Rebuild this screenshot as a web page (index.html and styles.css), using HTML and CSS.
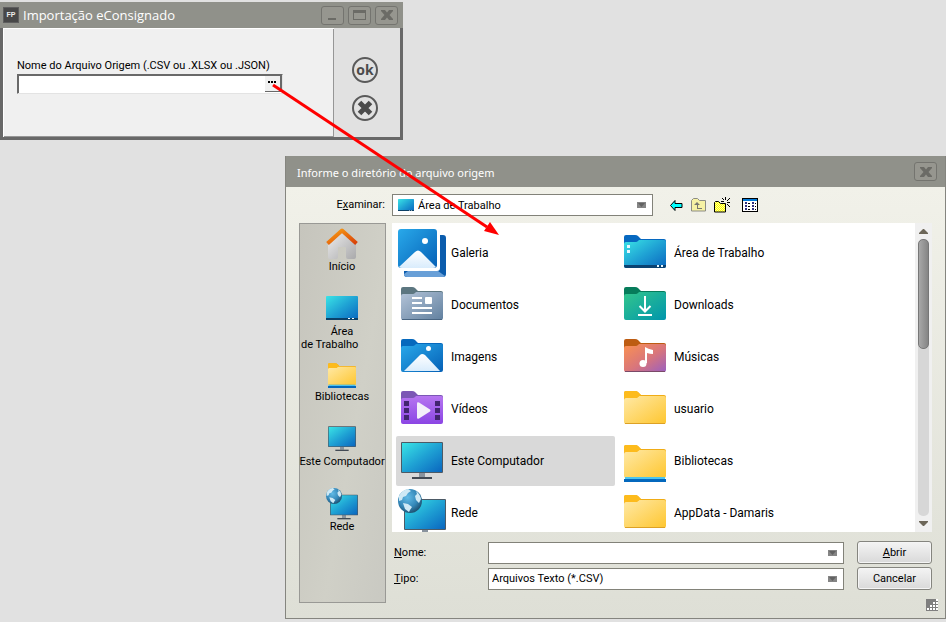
FILE: index.html
```html
<!DOCTYPE html>
<html lang="pt-BR">
<head>
<meta charset="utf-8">
<title>Importação eConsignado</title>
<link rel="stylesheet" href="styles.css">
</head>
<body>
<svg class="defs" aria-hidden="true">
  <defs>
    <linearGradient id="g-yellow" x1="0" y1="0" x2="1" y2="1"><stop offset="0" stop-color="#ffe9a6"/><stop offset="1" stop-color="#fec62f"/></linearGradient>
    <linearGradient id="g-cyan" x1="0" y1="0" x2="1" y2="1"><stop offset="0" stop-color="#3ae4e6"/><stop offset=".5" stop-color="#1fa2d4"/><stop offset="1" stop-color="#0a66bf"/></linearGradient>
    <linearGradient id="g-blue" x1="0" y1="0" x2="1" y2="1"><stop offset="0" stop-color="#29a9ea"/><stop offset="1" stop-color="#0560b6"/></linearGradient>
    <linearGradient id="g-slate" x1="0" y1="0" x2="1" y2="1"><stop offset="0" stop-color="#b4c4d8"/><stop offset="1" stop-color="#61809f"/></linearGradient>
    <linearGradient id="g-green" x1="0" y1="0" x2="1" y2="1"><stop offset="0" stop-color="#33c68c"/><stop offset="1" stop-color="#0095ac"/></linearGradient>
    <linearGradient id="g-music" x1="0" y1="0" x2="1" y2="1"><stop offset="0" stop-color="#fb9250"/><stop offset=".55" stop-color="#d8757c"/><stop offset="1" stop-color="#9a5fc0"/></linearGradient>
    <linearGradient id="g-purple" x1="0" y1="0" x2="0" y2="1"><stop offset="0" stop-color="#b676f0"/><stop offset="1" stop-color="#8b45e4"/></linearGradient>
    <linearGradient id="g-snow" x1="0" y1="0" x2="0" y2="1"><stop offset="0" stop-color="#ffffff"/><stop offset="1" stop-color="#d9ecfc"/></linearGradient>
    <linearGradient id="g-house" x1="0" y1="0" x2="1" y2="1"><stop offset="0" stop-color="#f0f0f0"/><stop offset="1" stop-color="#a9a9ab"/></linearGradient>
    <linearGradient id="g-roof" x1="0" y1="0" x2="1" y2="1"><stop offset="0" stop-color="#f9a114"/><stop offset="1" stop-color="#d83f08"/></linearGradient>
    <radialGradient id="g-globe" cx=".4" cy=".35" r=".7"><stop offset="0" stop-color="#62bbe6"/><stop offset=".6" stop-color="#3487b8"/><stop offset="1" stop-color="#1c4a68"/></radialGradient>
    <symbol id="tab" viewBox="0 0 48 48"><path d="M3 20V8q0-2 2-2h9q2 0 3 1l3 3h23q2 0 2 2v3H3z"/></symbol>
    <symbol id="front" viewBox="0 0 48 48"><path d="M3 15q0-2 2-2h10q1 0 2-1l1-1h25q2 0 2 2v24q0 2-2 2H5q-2 0-2-2z"/></symbol>
    <symbol id="folder" viewBox="0 0 48 48"><use href="#tab" fill="#f0ac16"/><use href="#front" fill="url(#g-yellow)"/><path d="M3 8q0-2 2-2h9q2 0 3 1l3 3-3 2q-1 1-2 1H3z" fill="#fdbb1c"/><path d="M4 38.500h40" stroke="#dda125"/></symbol>
    <symbol id="library" viewBox="0 0 48 48"><use href="#folder" y="2"/><path d="M4 40h40v2H4z" fill="#4cc5ef"/><path d="M3 42h42v3H3z" fill="#0468bd"/></symbol>
    <symbol id="monitor" viewBox="0 0 48 48"><path d="M21 35h6v5h-6z" fill="#89939e"/><path d="M14 40h20v2H14z" fill="#424a54"/><rect x="3" y="5" width="42" height="31" rx="1" fill="#4c5a66"/><path d="M4 6h40v29H4z" fill="url(#g-cyan)"/></symbol>
    <symbol id="network" viewBox="0 0 48 48"><use href="#monitor" x="3" y="5"/><circle cx="12" cy="12" r="12" fill="url(#g-globe)"/><path d="M1 7q3-6 9-7l3 2-3 2-2 3-3 1-1 3-3 1zM18 2q4 3 5 8l-2 4-3-3-1-4 2-2zM5 14l5 1 4 3-2 3-1 2-4-3z" fill="#cfe9f5"/></symbol>
    <symbol id="desktop" viewBox="0 0 32 24"><rect width="32" height="24" rx="1" fill="url(#g-cyan)"/><path d="M0 22h32v2H0z" fill="#0b4067"/><path d="M22 22h2v1h-2zm4 0h2v1h-2z" fill="#fff"/></symbol>
    <symbol id="drop" viewBox="0 0 9 6"><path d="M0 0h9v6H0z" fill="#858585"/><path d="M1 1h7L4.500 5z" fill="#626262"/></symbol>
    <symbol id="close" viewBox="0 0 12 10"><path d="M0 0h4l2 2.500L8 0h4v1L8.500 5 12 9v1H8L6 7.500 4 10H0V9l3.500-4L0 1z"/></symbol>
    <pattern id="dither" width="2" height="2" patternUnits="userSpaceOnUse"><path d="M0 0h2v2H0z" fill="#ff0"/><path d="M0 0h1v1H0zM1 1h1v1H1z" fill="#ffff9c"/></pattern>
  </defs>
</svg>

<section class="window import" aria-label="Importação eConsignado">
  <header class="titlebar">
    <span class="app-icon">FP</span>
    <h1>Importação eConsignado</h1>
    <button class="caption" aria-label="Minimizar"><svg width="12" height="12"><path d="M1 9h8v2H1z"/></svg></button>
    <button class="caption" aria-label="Maximizar"><svg width="13" height="10"><path d="M0 0h13v10H0zm1 3v6h11V3z" fill-rule="evenodd"/></svg></button>
    <button class="caption" aria-label="Fechar"><svg width="12" height="10"><use href="#close"/></svg></button>
  </header>
  <div class="import-body">
    <form class="import-form">
      <label for="origem">Nome do Arquivo Origem (.CSV ou .XLSX ou .JSON)</label>
      <div class="picker">
        <input id="origem" type="text">
        <button type="button" aria-label="Procurar"><svg width="9" height="2"><path d="M0 0h2v2H0zM3 0h2v2H3zM6 0h2v2H6z"/></svg></button>
      </div>
    </form>
    <div class="import-actions">
      <button class="round">ok</button>
      <button class="round" aria-label="Cancelar"><svg width="16" height="16" viewBox="0 0 16 16"><path d="M2.500 2.500l11 11m0-11l-11 11" stroke="#4b4b4b" stroke-width="5"/></svg></button>
    </div>
  </div>
</section>

<section class="window chooser" aria-label="Informe o diretório do arquivo origem">
  <header class="titlebar">
    <h2>Informe o diretório do arquivo origem</h2>
    <button class="caption" aria-label="Fechar"><svg width="12" height="10"><use href="#close"/></svg></button>
  </header>
  <div class="chooser-body">
    <div class="toolbar">
      <label for="pasta">E<u>x</u>aminar:</label>
      <div class="combo lookin">
        <svg class="lead" width="16" height="12"><use href="#desktop"/></svg>
        <select id="pasta"><option>Área de Trabalho</option></select>
        <svg class="arrow" width="9" height="6"><use href="#drop"/></svg>
      </div>
      <div class="tools">
        <button aria-label="Voltar"><svg width="13" height="11"><path d="M.500 5.500l4.500-5v3h7v4H5v3z" fill="#0ff" stroke="#000"/></svg></button>
        <button aria-label="Um nível acima"><svg width="15" height="14"><path d="M.500 13V2.500l2-2h4l2 2h6V13z" fill="#f6f2a4" stroke="#8c8c84"/><path d="M3 7l3-3 3 3H7v3h4v1H6V7z" fill="#77776f"/></svg></button>
        <button aria-label="Nova pasta"><svg width="17" height="16"><path d="M.500 15V5.500l1-1h3l2 2h5V15z" fill="url(#dither)" stroke="#000"/><path d="M11 0h1v3h-1zM11 7h1v3h-1zM7 4h3v1H7zM13 5h3v1h-3zM8 1h1v1H8zM9 2h1v1H9zM15 1h1v1h-1zM14 2h1v1h-1zM13 3h1v1h-1zM13 7h1v1h-1zM14 8h1v1h-1zM15 9h1v1h-1z"/></svg></button>
        <button class="views" aria-label="Exibição"><svg width="16" height="14"><path d="M0 0h16v14H0z"/><path d="M1 3h14v10H1z" fill="#fff"/><path d="M1 1h14v2H1z" fill="#0078d7"/><path d="M3 4h2v2H3zM3 7h2v2H3zM3 10h2v2H3zM10 4h2v2h-2zM10 7h2v2h-2zM10 10h2v2h-2z" fill="#303080"/><path d="M6 5h2v1H6zM6 8h2v1H6zM6 11h2v1H6zM13 5h1v1h-1zM13 8h1v1h-1zM13 11h1v1h-1z"/></svg></button>
      </div>
    </div>
    <div class="columns">
      <nav class="places">
        <button><svg width="32" height="32"><path d="M2 14L16 2l14 12v15q0 2-2 2h-6q-2 0-2-2v-9q0-1-1-1h-6q-1 0-1 1v9q0 2-2 2H4q-2 0-2-2z" fill="url(#g-house)"/><path d="M1.500 15.500L16 2.500l14.500 13" fill="none" stroke="url(#g-roof)" stroke-width="4" stroke-linejoin="round"/></svg><span>Início</span></button>
        <button><svg width="32" height="32"><use href="#desktop" y="3" width="32" height="24"/></svg><span>Área</span><span class="second">de Trabalho</span></button>
        <button><svg width="32" height="32"><use href="#library"/></svg><span>Bibliotecas</span></button>
        <button><svg width="32" height="32"><use href="#monitor"/></svg><span>Este Computador</span></button>
        <button><svg width="32" height="32"><use href="#network"/></svg><span>Rede</span></button>
      </nav>
      <div class="main">
        <div class="listing">
          <div class="files">
            <button class="file"><svg viewBox="0 0 48 48"><path d="M42 6h3q3 0 3 3v36q0 3-3 3H9q-3 0-3-3v-3h33q3 0 3-3z" fill="#0b5cad"/><path d="M6 45l4-3h30l7 5q-1 1-2 1H9q-3 0-3-3z" fill="#689fd7"/><rect width="39" height="39" rx="3" fill="url(#g-blue)"/><path d="M1 38l16-15q3-3 6 0l15 15q-1 1-3 1H4q-2 0-3-1z" fill="url(#g-snow)"/><circle cx="27" cy="12" r="3" fill="#fff"/></svg>Galeria</button>
            <button class="file"><svg viewBox="0 0 48 48"><use href="#tab" fill="#5c7680"/><use href="#front" fill="url(#g-slate)"/><path d="M4 38.500h40" stroke="#496582"/><path d="M14 16h10v2H14zM14 21h10v2H14zM14 26h20v2H14zM14 31h20v2H14z" fill="#fff"/><rect x="27" y="16" width="7" height="7" rx="1" fill="#fff"/></svg>Documentos</button>
            <button class="file"><svg viewBox="0 0 48 48"><use href="#tab" fill="#0669bd"/><use href="#front" fill="url(#g-blue)"/><path d="M6 38l16-16q2-2 5 0l15 16z" fill="url(#g-snow)"/><circle cx="30.500" cy="15.500" r="2.500" fill="#fff"/></svg>Imagens</button>
            <button class="file"><svg viewBox="0 0 48 48"><use href="#tab" fill="#7b57b5"/><use href="#front" fill="url(#g-purple)"/><path d="M6 16h5v5H6zM6 23h5v5H6zM6 30h5v5H6zM37 16h5v5h-5zM37 23h5v5h-5zM37 30h5v5h-5z" fill="#42246f"/><path d="M19 18.500q0-2 2-1l11 7q1 1 0 2l-11 7q-2 1-2-1z" fill="#f4f0fa"/></svg>Vídeos</button>
            <button class="file selected"><svg viewBox="0 0 48 48"><use href="#monitor"/></svg>Este Computador</button>
            <button class="file"><svg viewBox="0 0 48 48"><use href="#network"/></svg>Rede</button>
            <button class="file"><svg viewBox="0 0 48 48"><use href="#tab" fill="#0668c0"/><use href="#front" fill="url(#g-cyan)"/><path d="M3 36h42v1q0 2-2 2H5q-2 0-2-2z" fill="#0a4272"/><path d="M6 16h3v3H6zM6 21h3v3H6zM36 36h2v2h-2zM40 36h2v2h-2z" fill="#e9f8ff"/></svg>Área de Trabalho</button>
            <button class="file"><svg viewBox="0 0 48 48"><use href="#tab" fill="#067c5b"/><use href="#front" fill="url(#g-green)"/><path d="M24 15v15M18.500 25l5.500 5.500 5.500-5.500M17 34h14" fill="none" stroke="#fff" stroke-width="2"/></svg>Downloads</button>
            <button class="file"><svg viewBox="0 0 48 48"><use href="#tab" fill="#bd5c12"/><use href="#front" fill="url(#g-music)"/><path d="M4 38.500h40" stroke="#7a4a68"/><circle cx="22" cy="30.500" r="3.500" fill="#fff"/><path d="M24 14q3 2 8 3v4q-3 0-6-1v10h-2z" fill="#fff"/></svg>Músicas</button>
            <button class="file"><svg viewBox="0 0 48 48"><use href="#folder"/></svg>usuario</button>
            <button class="file"><svg viewBox="0 0 48 48"><use href="#library"/></svg>Bibliotecas</button>
            <button class="file"><svg viewBox="0 0 48 48"><use href="#folder"/></svg>AppData - Damaris</button>
          </div>
          <div class="scrollbar">
            <svg width="9" height="5"><path d="M4 0h1l4 4v1H0V4z" fill="#6c6658"/></svg>
            <div class="track"><div class="thumb"></div></div>
            <svg width="9" height="5"><path d="M0 0h9v1L5 5H4L0 1z" fill="#6c6658"/></svg>
          </div>
        </div>
        <form class="fields">
          <label for="nome"><u>N</u>ome:</label>
          <div class="combo"><input id="nome" type="text"><svg class="arrow" width="9" height="6"><use href="#drop"/></svg></div>
          <button class="push" type="button"><u>A</u>brir</button>
          <label for="tipo"><u>T</u>ipo:</label>
          <div class="combo"><select id="tipo"><option>Arquivos Texto (*.CSV)</option></select><svg class="arrow" width="9" height="6"><use href="#drop"/></svg></div>
          <button class="push" type="button">Cancelar</button>
        </form>
      </div>
    </div>
    <svg class="grip" width="12" height="12"><path d="M0 0h12v12H0z" fill="#7f7f7f"/><path d="M10 0h2v2h-2zM7 3h2v2H7zM10 3h2v2h-2zM4 6h2v2H4zM7 6h2v2H7zM10 6h2v2h-2zM1 9h2v2H1zM4 9h2v2H4zM7 9h2v2H7zM10 9h2v2h-2z" fill="#fff"/></svg>
  </div>
</section>

<svg class="pointer" width="230" height="154" aria-hidden="true"><path d="M1 1l214 142" stroke="#f00" stroke-width="3"/><path d="M227 151l-15-4 6-9z" fill="#f00"/></svg>
</body>
</html>
```
FILE: styles.css
```css
* { box-sizing: border-box; }
body {
  margin: 0;
  min-height: 100vh;
  background: #e1e1e1;
  color: #000;
  font: 11px/14px Roboto, "Liberation Sans", sans-serif;
}
button, input, select {
  margin: 0;
  padding: 0;
  border: 0;
  border-radius: 0;
  background: none;
  color: inherit;
  font: inherit;
  appearance: none;
}
svg { display: block; flex: none; }
h1, h2 { margin: 0; flex: 1; color: #fff; font-weight: 400; }
.defs { position: absolute; width: 0; height: 0; }

.window { position: absolute; }
.titlebar { display: flex; align-items: center; background: #90918a; }
.caption {
  display: flex;
  align-items: center;
  justify-content: center;
  width: 23px;
  height: 19px;
  border: 1px solid #74746f;
  border-radius: 3px;
  background: #96968f;
  fill: #6b6b66;
}

.import {
  top: 2px;
  left: 0;
  width: 403px;
  border: solid #686868;
  border-width: 0 3px 3px;
}
.import .titlebar { height: 26px; margin: 0 -3px; padding: 0 5px 0 3px; gap: 4px; }
.import h1 { font: 13px/18px "Open Sans", sans-serif; }
.app-icon {
  width: 16px;
  height: 16px;
  background: #484848;
  border: 1px solid #5e5e5e;
  color: #eee;
  font: bold 7px/13px "Liberation Sans", sans-serif;
  text-align: center;
}
.import-body { display: flex; height: 109px; background: #e1e1e1; }
.import-form {
  flex: 1;
  padding: 30px 13px 0;
  border: 1px solid #fff;
  border-width: 1px 0 0 1px;
  background: #f0f0f0;
  box-shadow: inset -1px -1px #969696;
}
.import-form label { display: block; margin-bottom: 1px; white-space: nowrap; }
.picker {
  display: flex;
  width: 266px;
  height: 20px;
  border: 1px solid #e3e3e3;
  border-color: #696969 #e3e3e3 #e3e3e3 #696969;
  box-shadow: inset 1px 1px #696969;
  background: #fff;
}
.picker input { flex: 1; min-width: 0; padding: 0 4px; }
.picker button {
  display: flex;
  justify-content: center;
  width: 17px;
  height: 16px;
  margin-top: 1px;
  padding-top: 5px;
  border: solid #696969;
  border-width: 0 2px 1px 0;
  background: #f0f0f0;
}
.import-actions {
  display: flex;
  flex-direction: column;
  align-items: center;
  gap: 12px;
  width: 66px;
  padding: 29px 4px 0 0;
}
.round {
  display: flex;
  align-items: center;
  justify-content: center;
  width: 26px;
  height: 26px;
  border: 2px solid #5a5a5a;
  border-radius: 50%;
  color: #4b4b4b;
  font: bold 14px/18px "Open Sans", sans-serif;
}

.chooser {
  top: 156px;
  left: 285px;
  right: 0;
  border: solid #85857f;
  border-width: 0 1px 1px;
}
.chooser .titlebar { height: 31px; padding: 0 8px 0 11px; }
.chooser h2 { padding-top: 3px; font: 11px/16px "Noto Sans", sans-serif; }
.chooser-body {
  position: relative;
  padding: 0 13px 15px;
  background: linear-gradient(#f1f1e9, #dedfd6);
}
.toolbar { display: flex; align-items: center; height: 36px; gap: 7px; }
.toolbar label { width: 86px; text-align: right; }
.combo { position: relative; display: flex; height: 22px; }
.combo select, .combo input {
  width: 100%;
  padding: 1px 20px 0 3px;
  border: 1px solid #828279;
  background: #fff;
}
.lookin { width: 261px; }
.lookin select { padding-left: 25px; }
.lead { position: absolute; left: 6px; top: 5px; }
.arrow { position: absolute; right: 7px; top: 8px; pointer-events: none; }
.tools { display: flex; align-items: center; gap: 8px; padding-left: 10px; }
.views { margin-left: 3px; }

.columns { display: flex; gap: 6px; }
.places {
  width: 87px;
  padding: 4px 1px 0 0;
  border: 1px solid #999995;
  background: linear-gradient(100deg, #c6c5bd, #d0d0c7 60%, #c9c9c2);
}
.places button {
  display: flex;
  flex-direction: column;
  align-items: center;
  width: 100%;
  height: 65px;
  line-height: 13px;
  white-space: nowrap;
}
.places .second { align-self: flex-start; padding-left: 1px; }
.main { flex: 1; min-width: 0; }
.listing { display: flex; height: 309px; overflow: hidden; background: #fff; }
.files {
  flex: 1;
  display: grid;
  grid-template-rows: repeat(6, 50px);
  grid-auto-columns: 219px;
  grid-auto-flow: column;
  gap: 2px 4px;
  padding: 5px 0 0 4px;
}
.file {
  display: flex;
  align-items: center;
  gap: 5px;
  padding-left: 2px;
  border-radius: 2px;
  font-size: 12px;
  line-height: 16px;
}
.file svg { width: 48px; height: 48px; }
.selected { background: #d9d9d9; }
.scrollbar {
  display: flex;
  flex-direction: column;
  align-items: center;
  gap: 5px;
  width: 17px;
  padding: 6px 0;
  background: #f0f0f0;
}
.track { flex: 1; width: 11px; border-radius: 5px; background: #d7d7d7; }
.thumb { height: 110px; border-radius: 5px; border: 1px solid #777; background: linear-gradient(90deg, #a8a8a8, #858585); }
.fields {
  display: grid;
  grid-template-columns: 94px 1fr 75px;
  grid-template-rows: 23px 23px;
  align-items: center;
  row-gap: 3px;
  padding: 9px 0 13px 2px;
}
.fields .combo { margin-right: 13px; }
.push {
  height: 23px;
  border: 1px solid #85857f;
  border-radius: 3px;
  box-shadow: inset 0 0 0 1px #f5f5f5;
  background: linear-gradient(#f4f4f4, #d9d9d9);
}
.grip { position: absolute; right: 7px; bottom: 7px; }
.pointer { position: absolute; left: 272px; top: 84px; pointer-events: none; }
```
